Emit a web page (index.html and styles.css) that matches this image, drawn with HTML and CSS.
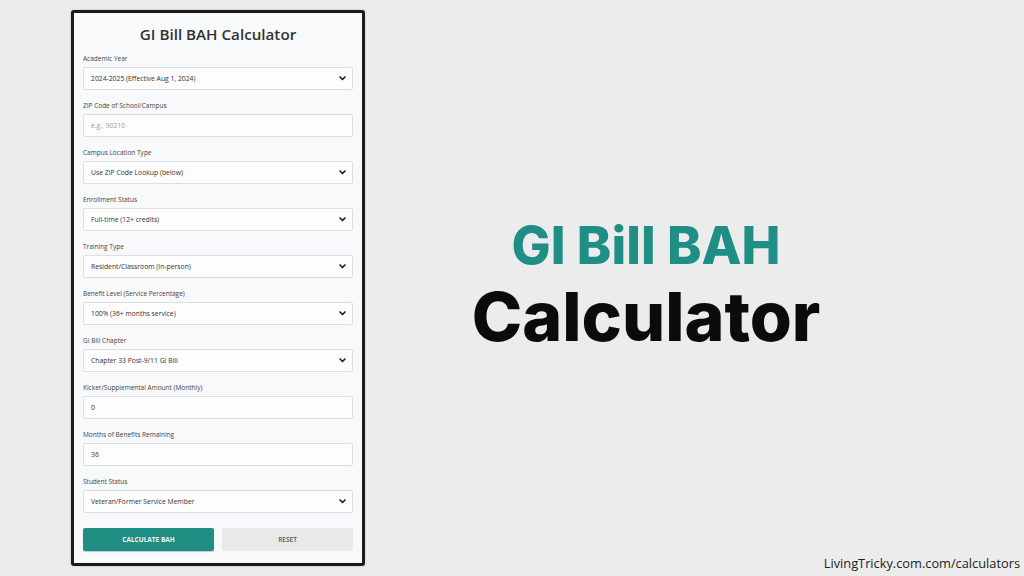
FILE: index.html
```html
<!DOCTYPE html>
<html lang="en">
<head>
<meta charset="utf-8">
<title>GI Bill BAH Calculator</title>
<link rel="stylesheet" href="styles.css">
</head>
<body>
<div class="page">
  <div class="card">
    <h1 class="card-title">GI Bill BAH Calculator</h1>

    <div class="field">
      <div class="label">Academic Year</div>
      <div class="control select"><span>2024-2025 (Effective Aug 1, 2024)</span><svg class="chev" viewBox="0 0 10 6"><polyline points="1.5,1.2 5,4.8 8.5,1.2"/></svg></div>
    </div>
    <div class="field">
      <div class="label">ZIP Code of School/Campus</div>
      <div class="control"><span class="ph">e.g., 90210</span></div>
    </div>
    <div class="field">
      <div class="label">Campus Location Type</div>
      <div class="control select"><span>Use ZIP Code Lookup (below)</span><svg class="chev" viewBox="0 0 10 6"><polyline points="1.5,1.2 5,4.8 8.5,1.2"/></svg></div>
    </div>
    <div class="field">
      <div class="label">Enrollment Status</div>
      <div class="control select"><span>Full-time (12+ credits)</span><svg class="chev" viewBox="0 0 10 6"><polyline points="1.5,1.2 5,4.8 8.5,1.2"/></svg></div>
    </div>
    <div class="field">
      <div class="label">Training Type</div>
      <div class="control select"><span>Resident/Classroom (In-person)</span><svg class="chev" viewBox="0 0 10 6"><polyline points="1.5,1.2 5,4.8 8.5,1.2"/></svg></div>
    </div>
    <div class="field">
      <div class="label">Benefit Level (Service Percentage)</div>
      <div class="control select"><span>100% (36+ months service)</span><svg class="chev" viewBox="0 0 10 6"><polyline points="1.5,1.2 5,4.8 8.5,1.2"/></svg></div>
    </div>
    <div class="field">
      <div class="label">GI Bill Chapter</div>
      <div class="control select"><span>Chapter 33 Post-9/11 GI Bill</span><svg class="chev" viewBox="0 0 10 6"><polyline points="1.5,1.2 5,4.8 8.5,1.2"/></svg></div>
    </div>
    <div class="field">
      <div class="label">Kicker/Supplemental Amount (Monthly)</div>
      <div class="control"><span>0</span></div>
    </div>
    <div class="field">
      <div class="label">Months of Benefits Remaining</div>
      <div class="control"><span>36</span></div>
    </div>
    <div class="field">
      <div class="label">Student Status</div>
      <div class="control select"><span>Veteran/Former Service Member</span><svg class="chev" viewBox="0 0 10 6"><polyline points="1.5,1.2 5,4.8 8.5,1.2"/></svg></div>
    </div>

    <div class="buttons">
      <div class="btn btn-primary">CALCULATE BAH</div>
      <div class="btn btn-secondary">RESET</div>
    </div>
  </div>

  <div class="side">
    <div class="hero">
      <div class="hero-top">GI Bill BAH</div>
      <div class="hero-bottom">Calculator</div>
    </div>
    <div class="footer">LivingTricky.com.com/calculators</div>
  </div>
</div>
</body>
</html>
```

FILE: styles.css
```css
* { box-sizing: border-box; }
html, body { margin: 0; padding: 0; }
body {
  background: #ececec;
  font-family: "Open Sans", "Liberation Sans", sans-serif;
}
.page {
  width: 1024px;
  height: 576px;
  display: flex;
  overflow: hidden;
}
.card {
  width: 294px;
  height: 556px;
  margin: 10px 0 0 71px;
  border: 3px solid #1b1b1b;
  border-radius: 3px;
  background: #f8f9fa;
  padding: 0 9px;
  box-shadow: 0 0 2px rgba(0,0,0,0.25);
}
.card-title {
  margin: 12px 0 11px;
  text-align: center;
  font-size: 15.2px;
  line-height: 18px;
  font-weight: 600;
  color: #333;
}
.field { margin-bottom: 11px; }
.label {
  font-size: 6.5px;
  line-height: 10px;
  color: #444;
  margin-bottom: 3px;
}
.control {
  height: 23px;
  background: #fdfdfd;
  border: 1px solid #dcdfe2;
  border-radius: 2px;
  display: flex;
  align-items: center;
  justify-content: space-between;
  padding: 0 6px 0 7px;
  font-size: 6.8px;
  color: #333;
}
.ph { color: #999; }
.chev {
  width: 7px;
  height: 4.5px;
  fill: none;
  stroke: #222;
  stroke-width: 2.4;
  stroke-linecap: round;
  stroke-linejoin: round;
}
.buttons {
  display: flex;
  gap: 8px;
  margin-top: 15px;
}
.btn {
  flex: 1;
  height: 23px;
  border-radius: 2px;
  display: flex;
  align-items: center;
  justify-content: center;
  font-size: 6.5px;
  font-weight: 700;
}
.btn-primary {
  background: #1f8f84;
  color: #f2f7f6;
  box-shadow: 0 1px 1px rgba(0,0,0,0.2);
}
.btn-secondary {
  background: #e7e9eb;
  color: #555;
  font-weight: 600;
}
.side {
  flex: 1;
  display: flex;
  flex-direction: column;
}
.hero {
  flex: 1;
  display: flex;
  flex-direction: column;
  align-items: center;
  justify-content: center;
  padding: 16px 97px 0 0;
  font-family: "Inter", "Lato", sans-serif;
  font-weight: 800;
}
.hero-top {
  font-size: 52px;
  line-height: 60px;
  color: #1f8f86;
}
.hero-bottom {
  font-size: 68px;
  line-height: 80px;
  color: #0b0b0b;
}
.footer {
  text-align: right;
  padding: 0 4px 5px 0;
  font-size: 12.8px;
  line-height: 16px;
  color: #222;
}
```
